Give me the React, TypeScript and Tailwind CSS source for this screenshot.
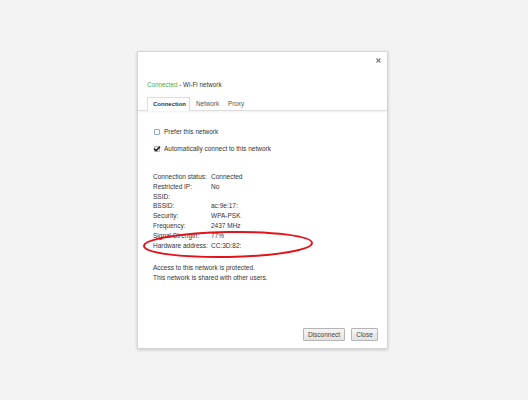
import { Check } from 'lucide-react';

const rows: [string, string][] = [
  ['Connection status:', 'Connected'],
  ['Restricted IP:', 'No'],
  ['SSID:', ''],
  ['BSSID:', 'ac:9e:17:'],
  ['Security:', 'WPA-PSK'],
  ['Frequency:', '2437 MHz'],
  ['Signal Strength:', '77%'],
  ['Hardware address:', 'CC:3D:82:'],
];

const font = { fontFamily: '"Liberation Sans", Arial, sans-serif' };

const App = () => {
  return (
    <div className="w-[528px] h-[400px] bg-[#f3f3f3] pt-[51px] pl-[137px]" style={font}>
      <div className="relative w-[251px] h-[298px] bg-white border border-[#d6d6d6] shadow-[0_1px_3px_rgba(0,0,0,0.18)] flex flex-col text-[#333]">
        {/* close button */}
        <div className="h-[17px] flex justify-end pr-[6px] pt-[6px]">
          <svg width="5" height="5" viewBox="0 0 5 5">
            <path d="M0.5 0.5 L4.5 4.5 M4.5 0.5 L0.5 4.5" stroke="#7a7a7a" strokeWidth="1.1" />
          </svg>
        </div>

        <div className="mt-[11px] pl-[9px] h-[10px] text-[6.3px] leading-[10px]">
          <span className="text-[#4cae4c]">Connected</span>
          <span> - Wi-Fi network</span>
        </div>

        {/* tabs */}
        <div className="mt-[7px] flex items-end pl-[9px] border-b border-[#dedede] shadow-[0_1px_2px_rgba(0,0,0,0.07)] text-[6.3px]">
          <div className="h-[14px] -mb-px w-[43px] pl-[5px] flex items-center bg-white border border-b-0 border-[#dcdcdc] font-bold text-[6px] text-[#333]">
            Connection
          </div>
          <div className="h-[13px] pl-[6px] w-[38px] flex items-center text-[#555]">Network</div>
          <div className="h-[13px] flex items-center text-[#555]">Proxy</div>
        </div>

        {/* options */}
        <div className="pl-[16px] text-[6.5px]">
          <label className="mt-[16px] h-[10px] flex items-center gap-[4px]">
            <span className="w-[6px] h-[6px] border border-[#8ea6d6] bg-white rounded-[1px]" />
            <span>Prefer this network</span>
          </label>
          <label className="mt-[7px] h-[10px] flex items-center gap-[4px]">
            <span className="w-[6px] h-[6px] border border-[#b5b5b5] bg-[#e4e4e4] rounded-[1px] flex items-center justify-center">
              <Check size={8} strokeWidth={4} color="#111" className="shrink-0" />
            </span>
            <span>Automatically connect to this network</span>
          </label>
        </div>

        {/* connection info */}
        <div className="mt-[18px] pl-[15px] text-[6.5px] leading-[9.8px]">
          {rows.map(([label, value]) => (
            <div key={label} className="flex">
              <span className="w-[58px] shrink-0">{label}</span>
              <span>{value}</span>
            </div>
          ))}
        </div>

        <div className="mt-[13px] pl-[15px] text-[6.5px] leading-[10px]">
          <div>Access to this network is protected.</div>
          <div>This network is shared with other users.</div>
        </div>

        <div className="mt-auto flex justify-end gap-[6px] pr-[9px] pb-[7px] text-[6.5px]">
          <button className="w-[42px] h-[13px] border border-[#b4b4b4] rounded-[1px] bg-gradient-to-b from-[#f4f4f4] to-[#e2e2e2] text-[#444]">
            Disconnect
          </button>
          <button className="w-[27px] h-[13px] border border-[#b4b4b4] rounded-[1px] bg-gradient-to-b from-[#f4f4f4] to-[#e2e2e2] text-[#444]">
            Close
          </button>
        </div>

        {/* red highlight around hardware address */}
        <svg className="absolute left-0 top-0 pointer-events-none" width="251" height="298">
          <ellipse
            cx="90"
            cy="192.5"
            rx="84"
            ry="12.5"
            transform="rotate(-1 90 192.5)"
            fill="none"
            stroke="#e3131b"
            strokeWidth="2"
          />
        </svg>
      </div>
    </div>
  );
};

export default App;
